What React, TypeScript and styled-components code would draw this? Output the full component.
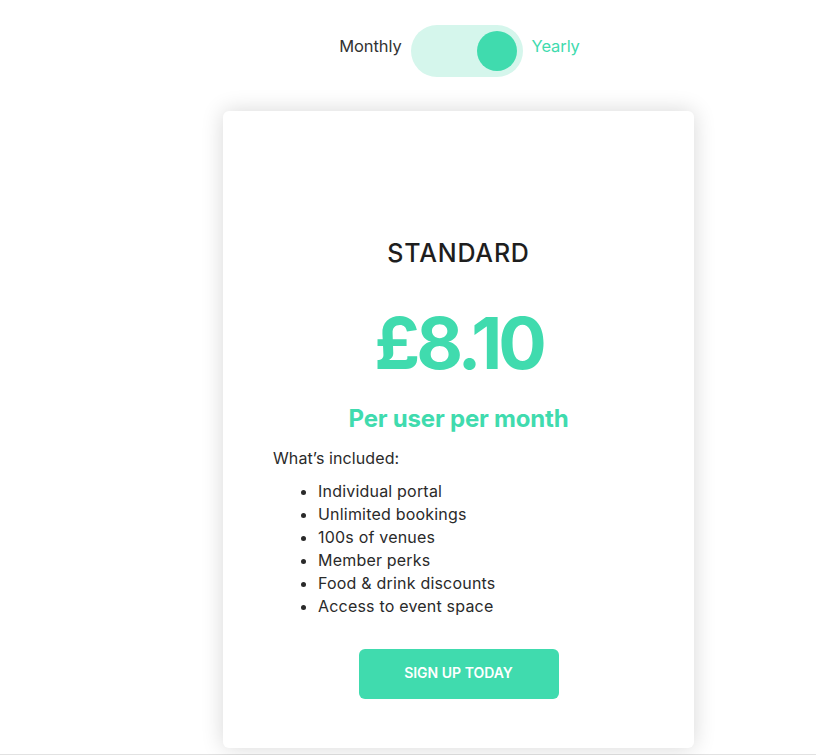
import React, { useState } from "react";
import styled, { createGlobalStyle } from "styled-components";

const GlobalStyle = createGlobalStyle`
  html, body { margin: 0; padding: 0; background: #ffffff; }
  body { font-family: "Inter", "Liberation Sans", sans-serif; color: #222; }
`;

const GREEN = "#40dbae";

const Page = styled.div`
  padding: 25px 0 0 223px;
  min-height: 755px;
  box-sizing: border-box;
`;

const Column = styled.div`
  width: 471px;
  display: flex;
  flex-direction: column;
  align-items: stretch;
`;

const ToggleRow = styled.div`
  display: flex;
  align-items: center;
  justify-content: center;
  gap: 9px;
  height: 52px;
  padding-left: 2px;
`;

const ToggleLabel = styled.span<{ $active: boolean }>`
  font-size: 16.5px;
  margin-bottom: 10px;
  color: ${(p) => (p.$active ? GREEN : "#333")};
  letter-spacing: -0.1px;
`;

const Track = styled.button<{ $on: boolean }>`
  position: relative;
  width: 112px;
  height: 52px;
  border-radius: 26px;
  border: none;
  padding: 0;
  background: #d5f6ec;
  cursor: pointer;
`;

const Knob = styled.span<{ $on: boolean }>`
  position: absolute;
  top: 6px;
  left: ${(p) => (p.$on ? "66px" : "6px")};
  width: 40px;
  height: 40px;
  border-radius: 50%;
  background: ${GREEN};
`;

const Card = styled.div`
  margin-top: 34px;
  background: #fff;
  border-radius: 6px;
  box-shadow: 0 0 22px rgba(0, 0, 0, 0.16);
  padding: 127px 50px 49px;
  display: flex;
  flex-direction: column;
`;

const PlanName = styled.h2`
  margin: 0;
  text-align: center;
  font-size: 25px;
  line-height: 30px;
  font-weight: 500;
  color: #1e1e1e;
  letter-spacing: 0.8px;
`;

const Price = styled.div`
  margin-top: 39px;
  text-align: center;
  font-size: 72px;
  line-height: 72px;
  font-weight: 700;
  color: ${GREEN};
  letter-spacing: -4px;
`;

const Per = styled.div`
  margin-top: 25px;
  text-align: center;
  font-size: 24px;
  line-height: 30px;
  font-weight: 700;
  color: ${GREEN};
  letter-spacing: -0.2px;
`;

const Included = styled.div`
  margin-top: 13px;
  font-size: 16px;
  line-height: 23px;
  color: #2a2a2a;
  letter-spacing: 0.1px;
`;

const List = styled.ul`
  margin: 10px 0 0;
  padding-left: 45px;
  font-size: 16px;
  line-height: 23px;
  color: #2a2a2a;
  letter-spacing: 0.2px;
`;

const Button = styled.button`
  margin: 31px auto 0;
  width: 200px;
  height: 50px;
  padding: 0 0 4px;
  border: none;
  border-radius: 6px;
  background: ${GREEN};
  color: #fff;
  font-family: "Inter", "Liberation Sans", sans-serif;
  font-size: 14px;
  font-weight: 600;
  letter-spacing: 0;
  cursor: pointer;
`;

const BottomRule = styled.div`
  margin-top: 6px;
  margin-left: -223px;
  width: 816px;
  height: 2px;
  background: #e2e2e2;
`;

const features = [
  "Individual portal",
  "Unlimited bookings",
  "100s of venues",
  "Member perks",
  "Food & drink discounts",
  "Access to event space",
];

export default function App() {
  const [yearly, setYearly] = useState(true);
  return (
    <>
      <GlobalStyle />
      <Page>
        <Column>
          <ToggleRow>
            <ToggleLabel $active={false}>Monthly</ToggleLabel>
            <Track $on={yearly} onClick={() => setYearly(!yearly)} aria-label="Billing period">
              <Knob $on={yearly} />
            </Track>
            <ToggleLabel $active={true}>Yearly</ToggleLabel>
          </ToggleRow>
          <Card>
            <PlanName>STANDARD</PlanName>
            <Price>£8.10</Price>
            <Per>Per user per month</Per>
            <Included>What’s included:</Included>
            <List>
              {features.map((f) => (
                <li key={f}>{f}</li>
              ))}
            </List>
            <Button>SIGN UP TODAY</Button>
          </Card>
        </Column>
        <BottomRule />
      </Page>
    </>
  );
}
